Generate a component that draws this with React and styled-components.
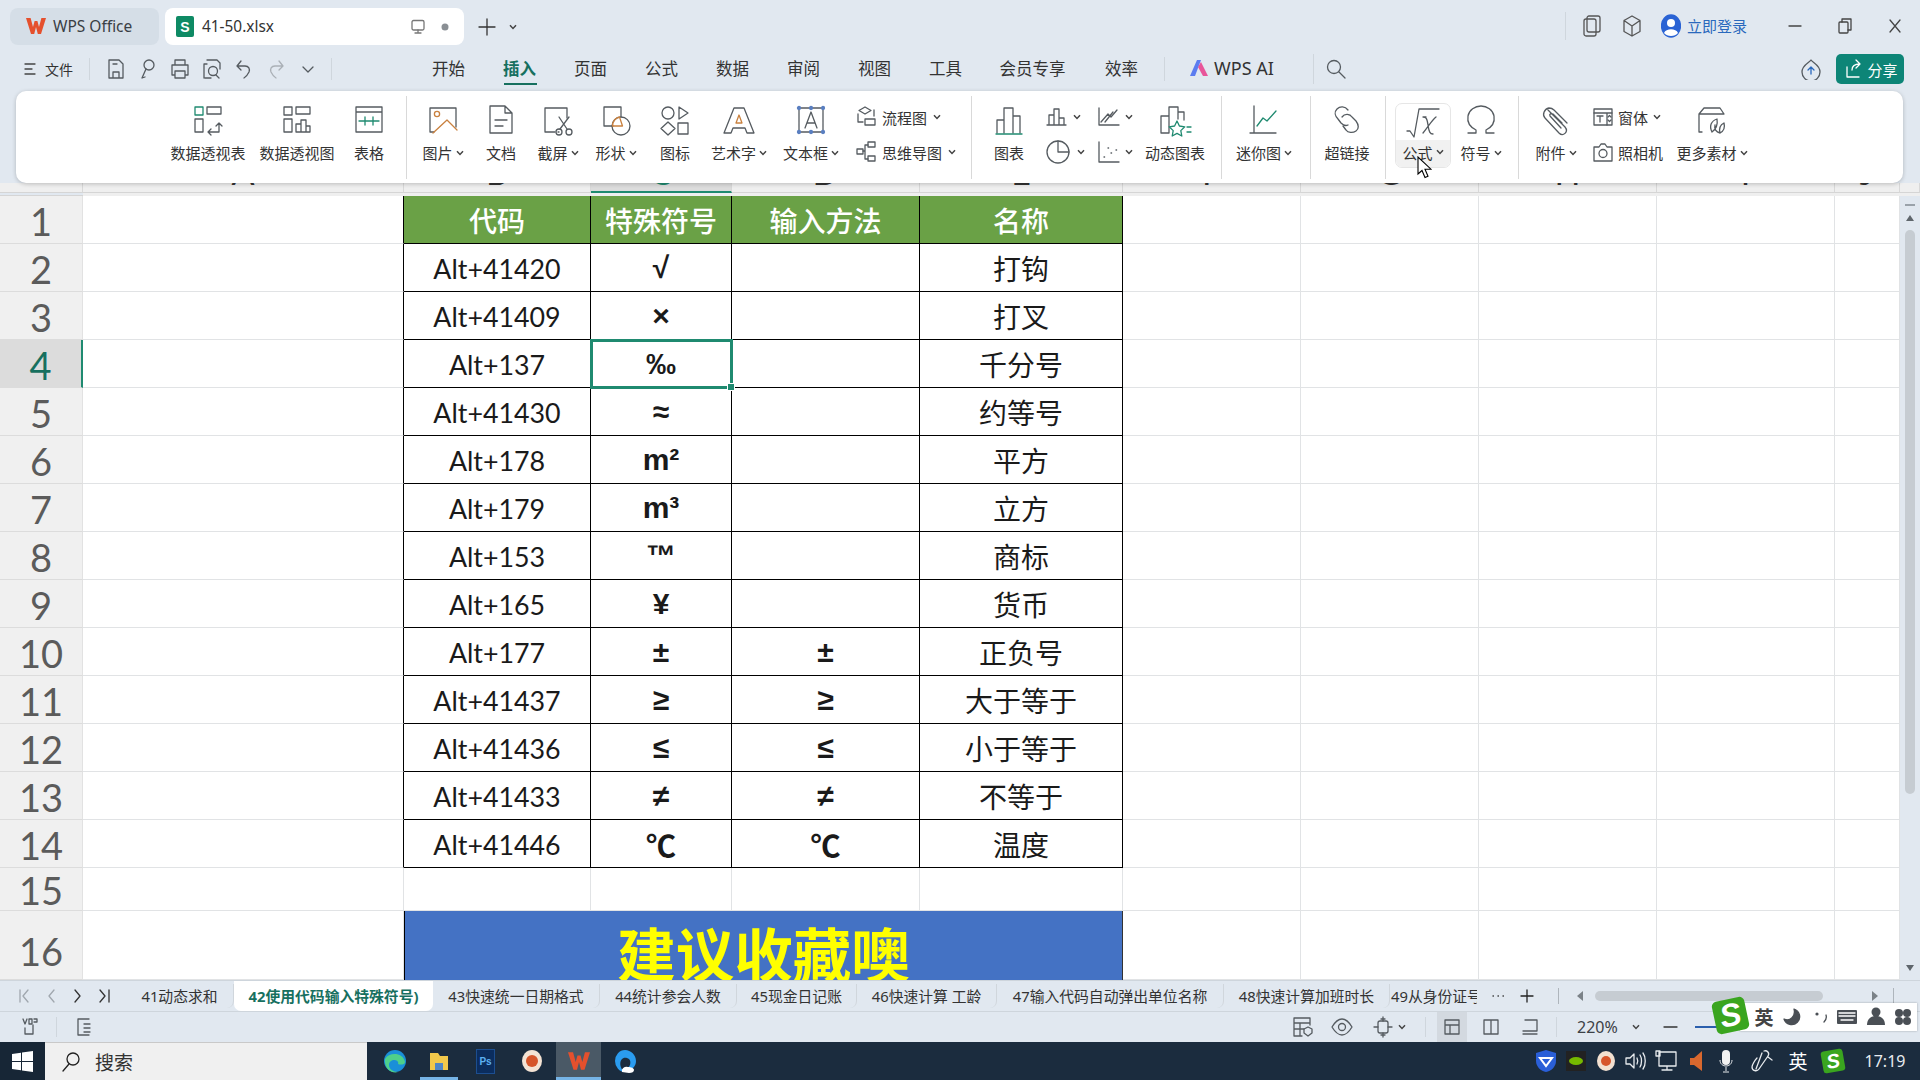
import React from 'react';
import styled, { createGlobalStyle } from 'styled-components';

const G = '#1f8a70', O = '#c9813f', S = '#555b60';
const CJK = '"Noto Sans","Noto Sans CJK SC",sans-serif';
const COLS = '83px 321px 187px 141px 188px 203px 178px 178px 178px 178px 65px';

const Global = createGlobalStyle`
  html, body { margin: 0; padding: 0; width: 1920px; height: 1080px; overflow: hidden; background: #e1e8f0; }
  body { font-family: ${CJK}; color: #333; }
  * { box-sizing: border-box; }
`;

const Page = styled.div`width:1920px;height:1080px;display:flex;flex-direction:column;overflow:hidden;background:#e1e8f0;`;
const Svg = styled.svg`flex:none;display:block;fill:none;stroke:${p => p.$c || S};stroke-width:${p => p.$sw || 1.3};stroke-linecap:round;stroke-linejoin:round;`;
const I = ({ s = 36, w, h, vb, c, sw, children }) => (
  <Svg width={w || s} height={h || s} viewBox={vb || `0 0 ${w || s} ${h || s}`} $c={c} $sw={sw}>{children}</Svg>
);
const Space = styled.span`width:${p => p.$w}px;flex:none;`;

/* ---------- title bar ---------- */
const TitleBar = styled.div`height:45px;padding:8px 0 0 10px;display:flex;align-items:stretch;`;
const AppTab = styled.div`width:149px;background:#d5dee7;border-radius:8px;display:flex;align-items:center;gap:7px;padding:0 0 2px 16px;font-size:15.5px;color:#3a3f45;`;
const DocTab = styled.div`width:299px;margin-left:6px;background:#fff;border-radius:8px;display:flex;align-items:center;padding:0 8px 0 11px;font-size:15.4px;color:#333;`;
const DocBadge = styled.span`width:18px;height:21px;background:#0e8a64;border-radius:2px;color:#fff;font:700 14px "Liberation Sans",sans-serif;display:flex;align-items:center;justify-content:center;margin-right:8px;`;
const DocName = styled.span`flex:1;padding-bottom:1px;`;
const PlusBox = styled.div`display:flex;align-items:center;margin-left:13px;gap:12px;`;
const TitleRight = styled.div`margin-left:auto;display:flex;align-items:center;height:36px;`;
const VLine = styled.span`width:1px;height:${p => p.$h || 24}px;background:${p => p.$c || '#cfd6dd'};flex:none;margin:${p => p.$m || '0'};`;
const Login = styled.span`color:#2a69bd;font-size:15px;margin-left:6px;padding-bottom:2px;`;
const WinBtn = styled.span`width:50px;display:flex;justify-content:center;`;

const WpsW = ({ s = 20 }) => (
  <svg width={s} height={s} viewBox="0 0 20 20"><path d="M0 2h4.6l2.4 9 1.6-6h2.8l1.6 6 2.4-9H20l-5 16h-3.2L10 11l-1.8 7H5z" fill="#e5502d" /></svg>
);

/* ---------- menu row ---------- */
const MenuRow = styled.div`height:32px;margin-top:8px;display:flex;align-items:center;`;
const MenuLeft = styled.div`width:412px;flex:none;display:flex;align-items:center;padding-left:24px;`;
const FileLabel = styled.span`font-size:14px;margin-left:9px;color:#333;`;
const QuickIcons = styled.div`display:flex;gap:8px;margin:0 11px 0 14px;`;
const MenuItem = styled.div`width:${p => p.$w || 71}px;margin-left:${p => p.$ml || 0}px;height:32px;flex:none;display:flex;align-items:center;justify-content:center;padding-bottom:2px;position:relative;font-size:16.5px;color:${p => (p.$on ? '#17705f' : '#333')};font-weight:${p => (p.$on ? 700 : 400)};
  ${p => p.$on && `&::after{content:"";position:absolute;bottom:0;left:20px;width:33px;height:2px;background:#17705f;}`}`;
const AiItem = styled.div`display:flex;align-items:center;gap:5px;font-size:18px;margin:0 39px 0 24px;color:#333;padding-bottom:2px;`;
const MenuRight = styled.div`margin-left:auto;display:flex;align-items:center;padding-right:16px;gap:14px;`;
const Share = styled.div`width:68px;height:30px;background:#0d8577;color:#fff;border-radius:5px;display:flex;align-items:center;justify-content:center;gap:3px;font-size:15px;`;

/* ---------- ribbon ---------- */
const Ribbon = styled.div`height:92px;margin:6px 17px 0 16px;background:#fff;border-radius:10px;box-shadow:0 1px 4px rgba(0,0,0,.22);display:flex;padding-left:148px;position:relative;z-index:2;`;
const RibSep = styled.span`width:1px;height:83px;margin:5px ${p => p.$r || 9}px 0 ${p => p.$l || 10}px;background:#d9d9d9;flex:none;`;
const RItem = styled.div`width:${p => p.$w}px;margin-left:${p => p.$ml || 0}px;flex:none;display:flex;flex-direction:column;align-items:center;padding-top:11px;font-size:15px;color:#333;white-space:nowrap;`;
const RLabel = styled.div`height:22px;margin-top:4px;display:flex;align-items:center;gap:3px;line-height:22px;`;
const Stack = styled.div`width:${p => p.$w}px;margin-left:${p => p.$ml || 0}px;flex:none;display:flex;flex-direction:column;padding-top:13px;gap:9px;font-size:15px;color:#333;white-space:nowrap;`;
const StackRow = styled.div`height:26px;display:flex;align-items:center;gap:${p => p.$g ?? 4}px;`;
const FormulaCard = styled.div`width:56px;height:65px;margin-top:12px;flex:none;border:1px solid #e6e6e6;border-radius:7px;overflow:visible;display:flex;flex-direction:column;position:relative;font-size:15px;color:#333;`;
const FormulaTop = styled.div`height:36px;display:flex;align-items:center;justify-content:center;`;
const FormulaBottom = styled.div`flex:1;background:#f1f1f1;border-radius:0 0 6px 6px;display:flex;align-items:center;justify-content:center;gap:3px;padding-bottom:3px;`;
const Pointer = styled.span`position:absolute;left:21px;top:52px;width:15px;height:24px;`;

const Caret = () => (
  <svg width="8" height="6" viewBox="0 0 8 6" style={{ flex: 'none' }}><path d="M1 1.2 4 4.4 7 1.2" fill="none" stroke="#444" strokeWidth="1.5" /></svg>
);

const PivotT = () => <I><rect x="5" y="5" width="8" height="8" stroke={G} /><path d="M17 5h14v7H17zM5 17h8v13H5zM18 30h11v-9M26 24l3-3 3 3M21 27l-3 3 3 3" /></I>;
const PivotC = () => <I><path d="M5 5h8v8H5zM17 5h14v7H17zM5 17h8v13H5zM17 30V22h5v8M22 30V18h5v12M27 24h4v6H17" /></I>;
const Table = () => <I><path d="M5 5h26v25H5zM5 10h26" /><path d="M8 19h20M14 15v8M22 15v8" stroke={G} /></I>;
const Pic = () => <I><path d="M9 30H5V6h26v19" /><circle cx="12" cy="12" r="2.6" stroke={O} /><path d="M8 31 22 18l10 10" stroke={O} /></I>;
const Doc = () => <I><path d="M7 4h15l7 7v20H7zM22 4v7h7M12 18h12M12 24h8" /></I>;
const Shot = () => <I><path d="M27 16V6H5v24h10M18 30h1" /><path d="m19 15 8 12M29 15l-9 12" /><circle cx="19" cy="30" r="3" /><circle cx="29" cy="30" r="3" /></I>;
const Shape = () => <I><path d="M15 24H6V5h17v10" /><circle cx="23" cy="24" r="9" /><path d="M14.500 24a9 9 0 0 1 7-9l3 9z" stroke={O} /></I>;
const IconSet = () => <I><circle cx="11" cy="11" r="6" /><path d="M22 5v12l9-6zM11 20l7 6.500-7 6.500-7-6.500zM21 21h10v11H21z" /></I>;
const Art = () => <I><path d="M13 6h10l10 25h-7l-2-5H12l-2 5H3z" /><path d="m15 21 3-8 3 8z" stroke={O} fill="none" /></I>;
const TextBox = () => (
  <I><path d="M8 6h20M8 30h20M6 8v20M30 8v20M12 26l6-16 6 16M14 21h8" />
    {[[6, 6], [30, 6], [6, 30], [30, 30], [18, 30], [18, 6]].map(([x, y]) => <circle key={x + '' + y} cx={x} cy={y} r="1.500" stroke="#5a7fc0" fill="#5a7fc0" />)}
  </I>
);
const Flow = () => <I w={20} h={22}><path d="m9 1 6 3.500-6 3.500-6-3.500zM2 8v8h5M18 4v6" /><rect x="9" y="13" width="10" height="6" /></I>;
const Mind = () => <I w={20} h={22}><rect x="1" y="8" width="6" height="5" /><rect x="12" y="1" width="7" height="5" /><rect x="12" y="15" width="7" height="5" /><path d="M7 10h2V4h3M9 10v8h3" /></I>;
const ChartBig = () => <I><path d="M6 31V18h7v13M13 31V6h9v25M22 31V14h7v17" /><path d="M5 32h26" stroke={G} /></I>;
const Bars = () => <I w={22} h={22}><path d="M3 18V9h5v9M8 18V3h5v15M13 18v-6h5v6M1 19h19" /></I>;
const LineC = () => <I w={24} h={22}><path d="M3 2v17h20M5 16l7-8 3 3 6-7" /><path d="M9 16l8-10" /></I>;
const Pie = () => <I w={26} h={26}><circle cx="12" cy="13" r="11" /><path d="M12 2v11h11" /></I>;
const Scatter = () => <I w={24} h={26}><path d="M3 3v20h20" /><path d="M8 18h.6M12 9h.6M15 14h.6M20 11h.6" /></I>;
const Dyn = () => <I><path d="M4 31V14h8v17zM12 31V5h9v12M21 10h6v8" /><path d="m20 19 2.400 5 5.400.8-4 3.800 1 5.400-4.800-2.600-4.800 2.600 1-5.400-4-3.800 5.400-.8z" stroke={G} /><path d="M30 25h4M30 30h4" stroke={G} /></I>;
const Spark = () => <I><path d="M8 4v27M4 31h26" /><path d="m11 24 6-8 4 3 9-10" stroke={G} /></I>;
const LinkI = () => <I><path d="M19 8c-3-4-8-4-11-1s-2 7 1 10l3 4c3 3 5 3 7 2" /><path d="M13 15c3-4 8-3 10 0l4 4c3 4 3 8 0 10s-8 2-10-1l-3-4" /></I>;
const Root = () => <I w={38} h={34}><path d="M3 26h3l4 6 5-28h20" /><path d="M19 12c3 0 4 1 5 8s2 9 5 9M32 12c-4 3-8 10-13 16M19 12h3" /></I>;
const Omega = () => <I><path d="M5 31h8v-3C7 25 4 20 5 14 6 8 12 4 18 4s12 4 13 10c1 6-2 11-8 14v3h8" /></I>;
const Clip = () => <I><path d="m10 8 17 17c4 5-2 10-6 6L7 16c-3-3-1-9 4-10 2 0 4 1 5 2l13 13M23 26 12 14c-1-2 1-3 3-2l9 9" /></I>;
const Form = () => <I w={20} h={20}><rect x="1" y="2" width="18" height="16" /><path d="M1 6h18M4 9h6M7 9v6M14 6v12" /><path d="m15 10 1.500-1.500L18 10M15 13l1.500 1.500L18 13" /></I>;
const Cam = () => <I w={20} h={20}><path d="M1 5h5l2-3h4l2 3h5v14H1z" /><circle cx="10" cy="11.500" r="4" /></I>;
const More = () => <I><path d="M8 30H5V12l5-6h16l4 6M5 12h25" /><path d="M18 30c-3-6-1-11 5-13 1 6-1 10-5 13ZM26 31c-4-1-6-4-5-8M26 31c4-2 5-6 4-10-4 2-5 6-4 10Z" /></I>;

/* ---------- sheet ---------- */
const Strip = styled.div`height:13px;display:grid;grid-template-columns:${COLS} 20px;background:#efefef;overflow:hidden;`;
const StripCell = styled.div`display:flex;justify-content:center;border-right:${p => (p.$end ? '0' : '1px solid #d8d8d8')};border-bottom:${p => (p.$on ? `2px solid ${G}` : '1px solid #d5d5d5')};background:${p => (p.$on ? '#dcdcdc' : p.$bar ? '#e1e8f0' : '#efefef')};overflow:hidden;`;
const StripLetter = styled.span`font:34px/34px Lato,sans-serif;color:${p => (p.$on ? G : '#333')};margin-top:-28px;`;

const SheetWrap = styled.div`height:784px;display:flex;`;
const Sheet = styled.div`width:1900px;height:784px;display:grid;grid-template-columns:${COLS};grid-template-rows:repeat(14,48px) 43px 69px;background:#fff;overflow:hidden;`;
const RowHead = styled.div`background:${p => (p.$on ? '#dcdcdc' : '#f0f0f0')};color:${p => (p.$on ? '#17705f' : '#5b5b5b')};font:38px/1 Lato,sans-serif;display:flex;align-items:${p => (p.$last ? 'flex-start' : 'center')};padding-top:${p => (p.$last ? 21 : 2)}px;justify-content:center;border-bottom:1px solid #dcdcdc;border-right:${p => (p.$on ? `2px solid ${G}` : '1px solid #e2e2e2')};`;
const Cell = styled.div`border-right:1px solid #e1e3e5;border-bottom:1px solid #e1e3e5;`;
const LeftCell = styled(Cell)`border-right-color:#000;`;
const TCell = styled.div`border-right:1px solid #000;border-bottom:1px solid #000;display:flex;align-items:center;justify-content:center;color:#1a1a1a;position:relative;
  font-size:${p => (p.$code ? 26.800 : p.$sym ? 30 : 28)}px;padding-top:${p => (p.$code ? 2 : p.$sym ? 1 : 0)}px;
  font-family:${p => (p.$sym ? '"Liberation Sans","Noto Sans CJK SC",sans-serif' : 'Lato,"Noto Sans CJK SC",sans-serif')};font-weight:${p => (p.$sym ? 700 : 400)};`;
const HCell = styled(TCell)`background:#6aa146;color:#fff;font-family:"Noto Sans CJK SC",sans-serif;font-weight:500;`;
const SelCell = styled(TCell)`outline:3px solid #1f8a70;outline-offset:-2px;z-index:1;
  &::after{content:"";position:absolute;right:-4px;bottom:-4px;width:6px;height:6px;background:#1f8a70;border:1px solid #fff;}`;
const Banner = styled.div`grid-column:span 4;background:#4472c4;border-left:1px solid #000;border-right:1px solid #333;display:flex;justify-content:center;overflow:hidden;color:#ffff00;font:700 58.500px/1 "Noto Sans CJK SC",sans-serif;padding-top:12px;`;
const VBar = styled.div`width:20px;background:#e1e8f0;display:flex;flex-direction:column;align-items:center;padding-top:8px;`;
const VDash = styled.span`width:10px;height:1.500px;background:#9aa2aa;`;
const VArrow = styled.svg`flex:none;margin:${p => p.$m};`;
const VThumb = styled.span`width:10px;height:564px;margin-top:8px;background:#c6ccd2;border-radius:5px;`;
const VGap = styled.span`flex:1;`;

/* ---------- sheet tabs ---------- */
const TabBar = styled.div`height:32px;display:flex;align-items:flex-start;border-top:1px solid #ced5dc;border-bottom:1px solid #ced5dc;background:#e1e8f0;`;
const TabNav = styled.div`width:126px;height:30px;flex:none;display:flex;align-items:center;padding-left:18px;gap:15px;`;
const Tab = styled.div`width:${p => p.$w}px;height:${p => (p.$on ? 30 : 24)}px;margin-top:${p => (p.$on ? 0 : 3)}px;flex:none;display:flex;align-items:center;justify-content:${p => (p.$clip ? 'flex-start' : 'center')};padding-left:${p => (p.$clip ? 1 : 0)}px;padding-bottom:1px;font-size:14.800px;white-space:nowrap;overflow:hidden;color:${p => (p.$on ? '#17705f' : '#333')};font-weight:${p => (p.$on ? 700 : 400)};background:${p => (p.$on ? '#fff' : 'transparent')};border-radius:0 0 7px 7px;border-right:${p => (p.$sep ? '1px solid #d0d6dc' : '0')};`;
const TabTools = styled.div`flex:1;height:30px;display:flex;align-items:center;padding-left:14px;`;
const HThumb = styled.span`width:228px;height:10px;background:#c6ccd2;border-radius:5px;margin:0 0 0 11px;`;

/* ---------- status bar ---------- */
const Status = styled.div`height:30px;display:flex;align-items:center;position:relative;padding-left:19px;background:#e1e8f0;`;
const StatusRight = styled.div`margin-left:auto;display:flex;align-items:center;height:30px;width:650px;padding-left:20px;`;
const ViewBtn = styled.span`width:30px;height:30px;margin:0 4.500px;display:flex;align-items:center;justify-content:center;background:${p => (p.$on ? '#d3d9e0' : 'transparent')};`;
const Pct = styled.span`font-size:16px;color:#3c4146;margin:0 14px 0 20px;`;
const Slide = styled.span`width:36px;height:2px;background:#2b5fad;margin-left:14px;`;
const Ime = styled.div`position:absolute;left:1740px;top:-9px;width:177px;height:28px;background:#fff;box-shadow:0 0 2px rgba(0,0,0,.3);display:flex;align-items:center;padding-left:13px;z-index:3;color:#444;font-size:19px;font-weight:700;`;
const ImeLogo = styled.span`position:absolute;left:1714px;top:-13px;width:33px;height:33px;background:#3aa51f;border-radius:5px;transform:rotate(-12deg);color:#fff;font:italic 700 32px/33px "Liberation Sans",sans-serif;text-align:center;z-index:4;`;
const ImeItem = styled.span`width:${p => p.$w || 28}px;flex:none;display:flex;justify-content:center;`;

/* ---------- taskbar ---------- */
const Taskbar = styled.div`height:38px;background:#1b2c3e;display:flex;align-items:stretch;`;
const Start = styled.div`width:45px;display:flex;align-items:center;justify-content:center;background:#172636;`;
const Search = styled.div`width:322px;background:#f0f0f0;display:flex;align-items:center;padding-left:15px;gap:13px;font-size:19px;color:#333;border-top:1px solid #c9c9c9;`;
const App = styled.div`width:${p => p.$w || 45}px;flex:none;margin-left:${p => p.$ml || 0}px;display:flex;align-items:center;justify-content:center;position:relative;background:${p => (p.$on ? '#4a5966' : 'transparent')};
  ${p => p.$run && `&::after{content:"";position:absolute;left:0;right:0;bottom:0;height:3px;background:#76b4e6;}`}`;
const PsBox = styled.span`width:19px;height:25px;background:#0b2d5e;border:1px solid #1c4e90;color:#5cb0f2;font:700 10px/23px "Liberation Sans",sans-serif;text-align:center;`;
const Tray = styled.div`margin-left:auto;display:flex;align-items:center;padding-right:14px;`;
const TrayItem = styled.span`width:${p => p.$w || 30}px;flex:none;display:flex;justify-content:center;color:#fff;font-size:19px;`;
const TrayS = styled.span`display:inline-block;width:22px;height:22px;background:#3aa51f;border-radius:3px;transform:rotate(-10deg);font:italic 700 20px/22px "Liberation Sans",sans-serif;text-align:center;color:#fff;`;
const Clock = styled.span`color:#e7ebef;font-size:16px;margin-left:11px;width:42px;text-align:center;`;

/* ---------- data ---------- */
const rows = [
  ['Alt+41420', '√', '', '打钩'], ['Alt+41409', '×', '', '打叉'], ['Alt+137', '‰', '', '千分号'],
  ['Alt+41430', '≈', '', '约等号'], ['Alt+178', 'm²', '', '平方'], ['Alt+179', 'm³', '', '立方'],
  ['Alt+153', '™', '', '商标'], ['Alt+165', '¥', '', '货币'], ['Alt+177', '±', '±', '正负号'],
  ['Alt+41437', '≥', '≥', '大于等于'], ['Alt+41436', '≤', '≤', '小于等于'], ['Alt+41433', '≠', '≠', '不等于'],
  ['Alt+41446', '℃', '℃', '温度'],
];
const tail = [0, 1, 2, 3, 4];
const letters = ['', 'A', 'B', 'C', 'D', 'E', 'F', 'G', 'H', 'I', 'J', ''];
const sheetTabs = [
  ['41动态求和', 108, true], ['42使用代码输入特殊符号)', 199, false, true], ['43快速统一日期格式', 167, true], ['44统计参会人数', 137, true],
  ['45现金日记账', 120, true], ['46快速计算 工龄', 140, true], ['47输入代码自动弹出单位名称', 227, true], ['48快速计算加班时长', 166, true],
];

function Grid() {
  const out = [];
  const tailCells = (k) => tail.map((i) => <Cell key={k + 't' + i} />);
  out.push(<RowHead key="h1">1</RowHead>, <LeftCell key="a1" />);
  ['代码', '特殊符号', '输入方法', '名称'].forEach((t) => out.push(<HCell key={t}>{t}</HCell>));
  out.push(...tailCells('r1'));
  rows.forEach((r, idx) => {
    const n = idx + 2;
    const C = n === 4 ? SelCell : TCell;
    out.push(<RowHead key={'h' + n} $on={n === 4}>{n}</RowHead>, <LeftCell key={'a' + n} />);
    out.push(<TCell key={'b' + n} $code>{r[0]}</TCell>, <C key={'c' + n} $sym>{r[1]}</C>, <TCell key={'d' + n} $sym>{r[2]}</TCell>, <TCell key={'e' + n}>{r[3]}</TCell>);
    out.push(...tailCells('r' + n));
  });
  out.push(<RowHead key="h15">15</RowHead>);
  for (let i = 0; i < 10; i++) out.push(<Cell key={'x' + i} />);
  out.push(<RowHead key="h16" $last>16</RowHead>, <Cell key="a16" />, <Banner key="ban">建议收藏噢</Banner>);
  out.push(...tailCells('r16'));
  return <Sheet>{out}</Sheet>;
}

export default function AppPage() {
  return (
    <Page>
      <Global />
      <TitleBar>
        <AppTab><WpsW />WPS Office</AppTab>
        <DocTab>
          <DocBadge>S</DocBadge><DocName>41-50.xlsx</DocName>
          <I w={14} h={16}><rect x="1" y="1.500" width="12" height="9.500" rx="1.500" stroke="#777" /><path d="M4 14h6M7 11v3" stroke="#777" /></I>
          <svg width="31" height="10" viewBox="0 0 31 10"><circle cx="20" cy="5" r="3.500" fill="#8a8f94" /></svg>
        </DocTab>
        <PlusBox>
          <I s={20}><path d="M10 2v16M2 10h16" stroke="#333" sw="2" /></I>
          <Caret />
        </PlusBox>
        <TitleRight>
          <VLine $h={28} $m="0 16px 0 0" />
          <I w={20} h={22} c="#555"><rect x="5" y="1" width="13" height="16" rx="2" /><rect x="2" y="4" width="12" height="17" rx="2" /></I>
          <Space $w={20} />
          <I w={20} h={22} c="#555"><path d="m10 1 8 4.500v11L10 21l-8-4.500v-11zM2 5.500 10 11l8-5.500M10 11v10" /></I>
          <Space $w={19} />
          <I w={20} h={24}><ellipse cx="10" cy="12" rx="9.500" ry="11" fill="#2a63d4" stroke="#2a63d4" /><circle cx="10" cy="9" r="4" fill="#fff" stroke="none" /><path d="M3 19c2-5 12-5 14 0-3 4-11 4-14 0z" fill="#fff" stroke="none" /></I>
          <Login>立即登录</Login>
          <Space $w={23} />
          <WinBtn><I s={14}><path d="M1 7h12" stroke="#444" sw="1.400" /></I></WinBtn>
          <WinBtn><I s={16}><path d="M5 4V1h9v11h-3" stroke="#444" /><rect x="2" y="4" width="9" height="11" rx="1" stroke="#444" /></I></WinBtn>
          <WinBtn><I s={14}><path d="m2 1 10 12M12 1 2 13" stroke="#444" /></I></WinBtn>
        </TitleRight>
      </TitleBar>

      <MenuRow>
        <MenuLeft>
          <I w={12} h={14}><path d="M1 2h10M1 7h7M1 12h10" stroke="#444" /></I>
          <FileLabel>文件</FileLabel>
          <VLine $h={22} $m="0 0 0 16px" />
          <QuickIcons>
            <I s={24}><path d="M5 3h10l4 4v14H5zM9 21v-6h6v6M9 7h4" /></I>
            <I s={24}><circle cx="13" cy="8" r="5" /><path d="M10 12 6 21M6 21l3-1" /></I>
            <I s={24}><path d="M7 8V3h10v5M7 18H4V8h16v10h-3M7 14h10v7H7z" /></I>
            <I s={24}><path d="M7 3h10l3 3v6M4 21V7h3M5 21h6" /><circle cx="13" cy="14" r="4.500" /><path d="m16 18 3 3" /></I>
            <I s={24}><path d="M9 4 5 9h8c4 0 5 3 4 6-1 2-3 5-5 6M5 9l4 4" /></I>
            <I s={24} c="#aab0b6"><path d="m15 4 4 5h-8c-4 0-5 3-4 6 1 2 3 5 5 6M19 9l-4 4" /></I>
            <I s={24}><path d="m7 10 5 5 5-5" /></I>
          </QuickIcons>
          <VLine $h={22} />
        </MenuLeft>
        {['开始', '插入', '页面', '公式', '数据', '审阅', '视图', '工具'].map((t, i) => (
          <MenuItem key={t} $on={i === 1} $ml={i === 0 ? 1 : 0}>{t}</MenuItem>
        ))}
        <MenuItem $w={85} $ml={9}>会员专享</MenuItem>
        <MenuItem $w={59} $ml={17}>效率</MenuItem>
        <VLine $h={24} $m="0 0 0 13px" />
        <AiItem>
          <svg width="20" height="18" viewBox="0 0 20 18"><path d="M1 17 8 1h4L6 17z" fill="#5b7cf0" /><path d="M9 8 12 3l7 14h-5z" fill="#e8559a" /></svg>
          WPS AI
        </AiItem>
        <VLine $h={30} />
        <Space $w={11} />
        <I s={22}><circle cx="9" cy="9" r="6.500" /><path d="m14 14 6 6" /></I>
        <MenuRight>
          <I s={22}><path d="M11 2c2 3 9 5 9 12a8 8 0 0 1-18 0C2 7 9 5 11 2z" /><path d="M11 16V9M8 12l3-3 3 3" stroke="#2a69bd" /></I>
          <Share>
            <I s={22} c="#fff"><path d="M5 9v10h12M10 12c0-4 3-6 8-6M14 2l4 4-4 4" /></I>
            分享
          </Share>
        </MenuRight>
      </MenuRow>

      <Ribbon>
        <RItem $w={88}><PivotT /><RLabel>数据透视表</RLabel></RItem>
        <RItem $w={90}><PivotC /><RLabel>数据透视图</RLabel></RItem>
        <RItem $w={54}><Table /><RLabel>表格</RLabel></RItem>
        <RibSep />
        <RItem $w={56} $ml={-1}><Pic /><RLabel>图片<Caret /></RLabel></RItem>
        <RItem $w={60}><Doc /><RLabel>文档</RLabel></RItem>
        <RItem $w={54}><Shot /><RLabel>截屏<Caret /></RLabel></RItem>
        <RItem $w={62}><Shape /><RLabel>形状<Caret /></RLabel></RItem>
        <RItem $w={56}><IconSet /><RLabel>图标</RLabel></RItem>
        <RItem $w={72}><Art /><RLabel>艺术字<Caret /></RLabel></RItem>
        <RItem $w={72}><TextBox /><RLabel>文本框<Caret /></RLabel></RItem>
        <Stack $w={103} $ml={9}>
          <StackRow $g={6}><Flow />流程图<Caret /></StackRow>
          <StackRow $g={6}><Mind />思维导图<Caret /></StackRow>
        </Stack>
        <RibSep $l={12} />
        <RItem $w={56}><ChartBig /><RLabel>图表</RLabel></RItem>
        <Stack $w={50} $ml={9}>
          <StackRow $g={5}><Bars /><Caret /></StackRow>
          <StackRow $g={5}><Pie /><Caret /></StackRow>
        </Stack>
        <Stack $w={43}>
          <StackRow $g={5}><LineC /><Caret /></StackRow>
          <StackRow $g={5}><Scatter /><Caret /></StackRow>
        </Stack>
        <RItem $w={72}><Dyn /><RLabel>动态图表</RLabel></RItem>
        <RibSep />
        <RItem $w={66}><Spark /><RLabel>迷你图<Caret /></RLabel></RItem>
        <RibSep $l={13} $r={8} />
        <RItem $w={56}><LinkI /><RLabel>超链接</RLabel></RItem>
        <RibSep />
        <FormulaCard>
          <FormulaTop><Root /></FormulaTop>
          <FormulaBottom>公式<Caret /></FormulaBottom>
          <Pointer>
            <svg width="15" height="24" viewBox="0 0 15 24"><path d="M1 1v17l4-3.500 3 7 3-1.300-3-7h6z" fill="#fff" stroke="#000" strokeWidth="1.100" /></svg>
          </Pointer>
        </FormulaCard>
        <RItem $w={60}><Omega /><RLabel>符号<Caret /></RLabel></RItem>
        <RibSep $l={7} />
        <RItem $w={56}><Clip /><RLabel>附件<Caret /></RLabel></RItem>
        <Stack $w={79} $ml={9}>
          <StackRow $g={5}><Form />窗体<Caret /></StackRow>
          <StackRow $g={5}><Cam />照相机</StackRow>
        </Stack>
        <RItem $w={80}><More /><RLabel>更多素材<Caret /></RLabel></RItem>
      </Ribbon>

      <Strip>
        {letters.map((l, i) => (
          <StripCell key={i} $on={l === 'C'}><StripLetter $on={l === 'C'}>{l}</StripLetter></StripCell>
        ))}
        <StripCell $bar $end />
      </Strip>

      <SheetWrap>
        <Grid />
        <VBar>
          <VDash />
          <VArrow width="10" height="8" viewBox="0 0 10 8" $m="8px 0 0"><path d="M5 1 9 7H1z" fill="#5f666c" /></VArrow>
          <VThumb />
          <VGap />
          <VArrow width="10" height="8" viewBox="0 0 10 8" $m="0 0 8px"><path d="M5 7 9 1H1z" fill="#5f666c" /></VArrow>
        </VBar>
      </SheetWrap>

      <TabBar>
        <TabNav>
          <I w={12} h={16}><path d="M2 2v12M10 2 5 8l5 6" stroke="#a0a7ae" sw="1.600" /></I>
          <I w={12} h={16}><path d="M9 2 4 8l5 6" stroke="#a0a7ae" sw="1.600" /></I>
          <I w={12} h={16}><path d="m3 2 5 6-5 6" stroke="#333" sw="1.800" /></I>
          <I w={12} h={16}><path d="m1 2 5 6-5 6M10 2v12" stroke="#333" sw="1.800" /></I>
        </TabNav>
        {sheetTabs.map(([t, w, sep, on]) => <Tab key={t} $w={w} $sep={sep} $on={on}>{t}</Tab>)}
        <Tab $w={87} $clip>49从身份证号</Tab>
        <TabTools>
          <I w={14} h={6}><path d="M2 3h.4M7 3h.4M12 3h.4" stroke="#333" sw="2.400" /></I>
          <Space $w={14} />
          <I s={16}><path d="M8 2v12M2 8h12" stroke="#222" sw="2.400" /></I>
          <VLine $h={16} $c="#aeb5bc" $m="0 0 0 23px" />
          <Space $w={17} />
          <svg width="8" height="10" viewBox="0 0 8 10"><path d="M7 0v10L1 5z" fill="#7b8288" /></svg>
          <HThumb />
          <Space $w={48} />
          <svg width="8" height="10" viewBox="0 0 8 10"><path d="M1 0v10l6-5z" fill="#7b8288" /></svg>
          <VLine $h={16} $c="#aeb5bc" $m="0 0 0 14px" />
        </TabTools>
      </TabBar>

      <Status>
        <I w={20} h={24}><path d="M6 13v6h8v-9" /><path d="M4 4l2 5 2-5M10 4h3v5h-3zM15 4h3v3h-3" /></I>
        <VLine $h={20} $m="0 16px 0 17px" />
        <I w={20} h={24}><path d="M16 4H5v16h11M11 9h6M11 13h6M11 17h6" /></I>
        <StatusRight>
          <I s={24}><path d="M20 10V3H4v18h8M4 8h16M10 8v13M4 14h10" /><path d="M18 12l4 2v4l-4 3-4-3v-4z" /></I>
          <Space $w={16} />
          <I s={24}><path d="M2 12c3-5 7-8 10-8s7 3 10 8c-3 5-7 8-10 8s-7-3-10-8z" /><circle cx="12" cy="12" r="3.500" /></I>
          <Space $w={17} />
          <I s={24}><rect x="7" y="6" width="10" height="12" rx="2" /><path d="M12 2v4M12 18v4M3 12h4M17 12h4M10 4h4M10 20h4" /></I>
          <Space $w={3} /><Caret />
          <VLine $h={20} $m="0 6px 0 19px" />
          <ViewBtn $on><I s={20}><path d="M3 3h14v14H3zM3 8h14M8 8v9" /></I></ViewBtn>
          <ViewBtn><I s={20}><path d="M3 3h14v14H3zM10 3v14" /></I></ViewBtn>
          <ViewBtn><I s={20}><path d="M5 3h12v11M3 17h14M3 14h14" /></I></ViewBtn>
          <VLine $h={20} $m="0 0 0 7px" />
          <Pct>220%</Pct>
          <Caret />
          <Space $w={21} />
          <I w={20} h={6}><path d="M3 3h13" stroke="#333" sw="2.400" /></I>
          <Slide />
        </StatusRight>
        <Ime>
          <ImeItem $w={22}>英</ImeItem>
          <ImeItem $w={34}><I w={18} h={18} c="#4a4f55"><path d="M11 1a8 8 0 1 1-10 10c6 3 12-3 10-10z" fill="#4a4f55" /></I></ImeItem>
          <ImeItem $w={24}><I w={16} h={16}><circle cx="4" cy="5" r="1.600" fill="#4a4f55" stroke="none" /><path d="M13 6c1 3 0 5-2 7" stroke="#4a4f55" sw="2.400" /></I></ImeItem>
          <ImeItem $w={28}><I w={22} h={16}><rect x="1" y="1" width="20" height="14" rx="1" fill="#4a4f55" stroke="none" /><path d="M3 4h16M3 7h16M5 11h12" stroke="#fff" sw="1" /></I></ImeItem>
          <ImeItem $w={30}><I w={20} h={20}><circle cx="10" cy="5" r="4.500" fill="#4a4f55" stroke="none" /><path d="M1 18c0-6 4-9 9-9s9 3 9 9z" fill="#4a4f55" stroke="none" /></I></ImeItem>
          <ImeItem $w={24}><I w={18} h={18}>{[[5, 5], [13, 5], [5, 13], [13, 13]].map(([x, y]) => <circle key={x + '-' + y} cx={x} cy={y} r="4" fill="#4a4f55" stroke="none" />)}</I></ImeItem>
        </Ime>
        <ImeLogo>S</ImeLogo>
      </Status>

      <Taskbar>
        <Start>
          <svg width="21" height="21" viewBox="0 0 21 21"><path d="M0 3l9-1.200V10H0zM10 1.600 21 0v10H10zM0 11h9v8.200L0 18zM10 11h11v10l-11-1.600z" fill="#fff" /></svg>
        </Start>
        <Search>
          <I s={22}><circle cx="13" cy="8" r="6" stroke="#222" /><path d="M9 13 3 20" stroke="#222" /></I>
          搜索
        </Search>
        <App $ml={5}>
          <svg width="24" height="24" viewBox="0 0 24 24"><circle cx="12" cy="12" r="11" fill="#1a8fd8" /><path d="M2 10c4-7 18-7 20 3 0 3-5 3-7 2 2-5-9-6-9 1 0 4 4 7 9 7-6 2-14-3-13-13z" fill="#4ed08a" /></svg>
        </App>
        <App $run $w={38} $ml={3}>
          <svg width="22" height="22" viewBox="0 0 22 22"><path d="M2 3h8l2 3h8v14H2z" fill="#f1c84b" /><path d="M7 20v-7h8v7z" fill="#4f86c6" /></svg>
        </App>
        <App $ml={5}><PsBox>Ps</PsBox></App>
        <App $w={48}>
          <svg width="22" height="24" viewBox="0 0 22 24"><ellipse cx="11" cy="12" rx="10" ry="11" fill="#f4e3d4" /><circle cx="11" cy="12" r="6" fill="#d6552a" /></svg>
        </App>
        <App $on $run><WpsW s={22} /></App>
        <App $w={48}>
          <svg width="24" height="26" viewBox="0 0 24 26"><path d="M12 2a10 11 0 1 0 0 22c-7-4-6-16 2-14 5 1 4 9 0 10 4 3 9-1 9-7 0-6-5-11-11-11z" fill="#2a9cf0" /><path d="M9 24a5 4 0 0 1 6-5c3 0 6 1 6 3s-2 3-5 3z" fill="#fff" /></svg>
        </App>
        <Tray>
          <TrayItem><svg width="22" height="24" viewBox="0 0 22 24"><path d="M11 1 21 4v8c0 6-5 10-10 11C6 22 1 18 1 12V4z" fill="#2a5fd8" /><path d="M5 9h12l-6 8z" fill="none" stroke="#fff" strokeWidth="2" /></svg></TrayItem>
          <TrayItem><svg width="20" height="20" viewBox="0 0 20 20"><rect width="20" height="20" fill="#222" /><ellipse cx="10" cy="10" rx="7" ry="4" fill="#76b900" /></svg></TrayItem>
          <TrayItem><svg width="20" height="22" viewBox="0 0 20 22"><ellipse cx="10" cy="11" rx="9" ry="10" fill="#f2e0d0" /><circle cx="10" cy="11" r="5" fill="#d6552a" /></svg></TrayItem>
          <TrayItem><I w={22} h={20} c="#e8ebee"><path d="M1 7h4l4-4v14l-4-4H1zM12 7c1 2 1 4 0 6M15 4c2 3 2 9 0 12M18 2c3 4 3 12 0 16" /></I></TrayItem>
          <TrayItem><I w={22} h={22} c="#e8ebee"><path d="M4 2h17v14H4zM1 1h4v5H1zM12 16v4M7 20h10" /></I></TrayItem>
          <TrayItem><svg width="14" height="22" viewBox="0 0 14 22"><path d="M13 1v20L5 15H1V8h4z" fill="#d9682e" /></svg></TrayItem>
          <TrayItem><svg width="14" height="24" viewBox="0 0 14 24"><rect x="3" y="1" width="8" height="15" rx="4" fill="#f2f2f2" /><path d="M1 11c0 8 12 8 12 0M7 18v4M4 23h6" fill="none" stroke="#e8ebee" /></svg></TrayItem>
          <TrayItem $w={42}><I w={24} h={24} c="#e8ebee"><path d="M14 2c3-1 6 2 4 5L9 20c-2 3-7 2-7-2 0-2 3-7 5-9M18 8l4 3M12 4l-6 16" /></I></TrayItem>
          <TrayItem $w={30}>英</TrayItem>
          <TrayItem $w={40}><TrayS>S</TrayS></TrayItem>
          <Clock>17:19</Clock>
        </Tray>
      </Taskbar>
    </Page>
  );
}
